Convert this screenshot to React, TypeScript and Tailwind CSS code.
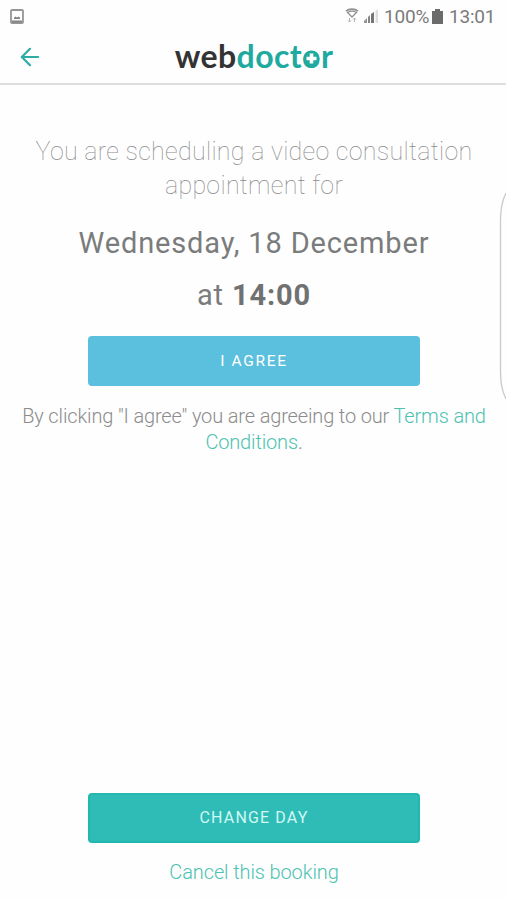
import { ArrowLeft } from "lucide-react";

function StatusBar() {
  return (
    <div className="flex h-8 shrink-0 items-center justify-between pr-[11px] pl-[10px] text-[#7b7b7b]">
      <svg className="h-[15px] w-[14px]" viewBox="0 0 14 15" fill="none">
        <rect x="1" y="1" width="12" height="13" rx="1" stroke="#969696" strokeWidth="1.8" />
        <path d="M2 12.500h10" stroke="#858585" strokeWidth="2" />
        <path d="M4 10h6V8.500L8.500 7.500 7 8.500 5.500 7.500 4 8.500z" fill="#858585" />
      </svg>
      <div className="flex items-center">
        <svg className="mr-1 h-4 w-[14px]" viewBox="0 0 14 16" fill="none" stroke="#8f8f8f">
          <path d="M1 3.200C4 .5 10 .5 13 3.200" strokeWidth="1.700" />
          <path d="M2.500 4.500c2.500-1.500 6.500-1.500 9 0L7 9z" strokeWidth="1.300" />
          <path d="M4.500 10v4M3 12.500L4.500 14 6 12.500M9.500 14v-4M8 11.500L9.500 10l1.500 1.500" stroke="#b0b0b0" strokeWidth="1" />
        </svg>
        <svg className="mr-[5px] h-4 w-4" viewBox="0 0 16 16">
          <path d="M1 15v-2l3-3v5z" fill="#959595" />
          <path d="M5 15V9l2-2v8z" fill="#858585" />
          <path d="M8 15V6l3-2v11z" fill="#757575" />
          <path d="M12.500 15V3L15 1v14z" fill="#dedede" />
        </svg>
        <span className="w-[46px] text-[19px] leading-none tracking-[-0.2px] whitespace-nowrap">100%</span>
        <svg className="mr-[6px] ml-[2px] h-[15px] w-[11px]" viewBox="0 0 11 15" fill="#6b6b6b">
          <path d="M3 0h5v2h3v13H0V2h3z" />
        </svg>
        <span className="w-[46px] text-[19px] leading-none tracking-[-0.2px] whitespace-nowrap">13:01</span>
      </div>
    </div>
  );
}

function Logo() {
  return (
    <div className="flex font-['Lato',sans-serif] text-[32px] leading-[36px] font-bold tracking-[0.4px] text-[#333333]">
      <span>web</span>
      <span className="text-[#20a99e]">doct</span>
      <span className="relative text-[#20a99e]">
        o
        <svg className="absolute top-[12px] left-[1px] h-[17px] w-[17px]" viewBox="0 0 17 17" fill="none">
          <circle cx="8.500" cy="8.500" r="8" fill="#20a99e" />
          <path d="M8.500 3.500v10M3.500 8.500h10" stroke="white" strokeWidth="3.600" />
        </svg>
      </span>
      <span className="text-[#20a99e]">r</span>
    </div>
  );
}

export default function App() {
  return (
    <main className="relative flex h-[900px] w-[506px] flex-col overflow-hidden bg-[#fefefe] font-['Roboto',sans-serif]">
      <StatusBar />
      <header className="flex h-[53px] shrink-0 items-center justify-center border-b-2 border-[#dedede] pb-[3px]">
        <button aria-label="Back" className="w-[155px] shrink-0 pt-px pl-[16px] text-[#2cada5]">
          <ArrowLeft size={28} strokeWidth={1.9} />
        </button>
        <div className="flex flex-1 justify-center">
          <Logo />
        </div>
        <div className="w-[153px] shrink-0" />
      </header>

      <section className="flex flex-col items-center pt-[50px] pl-[2px] text-center">
        <p className="text-[25px] leading-[34px] font-thin tracking-[0.3px] whitespace-nowrap text-[#8a8a8a]">
          You are scheduling a video consultation
          <br />
          appointment for
        </p>
        <h1 className="mt-[14px] text-[29px] leading-[52px] font-normal tracking-[0.85px] whitespace-nowrap text-[#7a7c7c]">
          Wednesday, 18 December
          <br />
          at <span className="font-bold text-[#707272]">14:00</span>
        </h1>
        <button className="mt-[15px] h-[50px] w-[332px] rounded-[4px] bg-[#5bc0de] pt-px text-[15.5px] font-normal tracking-[1.7px] text-white">
          I AGREE
        </button>
        <p className="mt-[17px] text-[20px] leading-[26px] font-light tracking-[-0.15px] whitespace-nowrap text-[#8c8c8c]">
          By clicking "I agree" you are agreeing to our <a className="text-[#4cc2b0]">Terms and</a>
          <br />
          <a className="text-[#4cc2b0]">Conditions</a>.
        </p>
      </section>

      <footer className="mt-auto flex flex-col items-center pb-[15px] pl-[2px]">
        <button className="h-[50px] w-[332px] rounded-[4px] border-2 border-[#22b7af] bg-[#30bcb6] text-[16px] tracking-[1.15px] text-[#d0f8f4]">
          CHANGE DAY
        </button>
        <a className="mt-4 text-[20px] leading-[26px] font-light tracking-[-0.12px] text-[#4cc2b0]">
          Cancel this booking
        </a>
      </footer>

      {/* edge panel handle */}
      <svg className="absolute top-[192px] right-0 h-[208px] w-[7px]" viewBox="0 0 7 208" fill="none">
        <path d="M7 1C4 7 1.500 16 1.500 28v152c0 12 2.500 21 5.500 27" stroke="#c9c9c9" strokeWidth="1.300" />
      </svg>
    </main>
  );
}
